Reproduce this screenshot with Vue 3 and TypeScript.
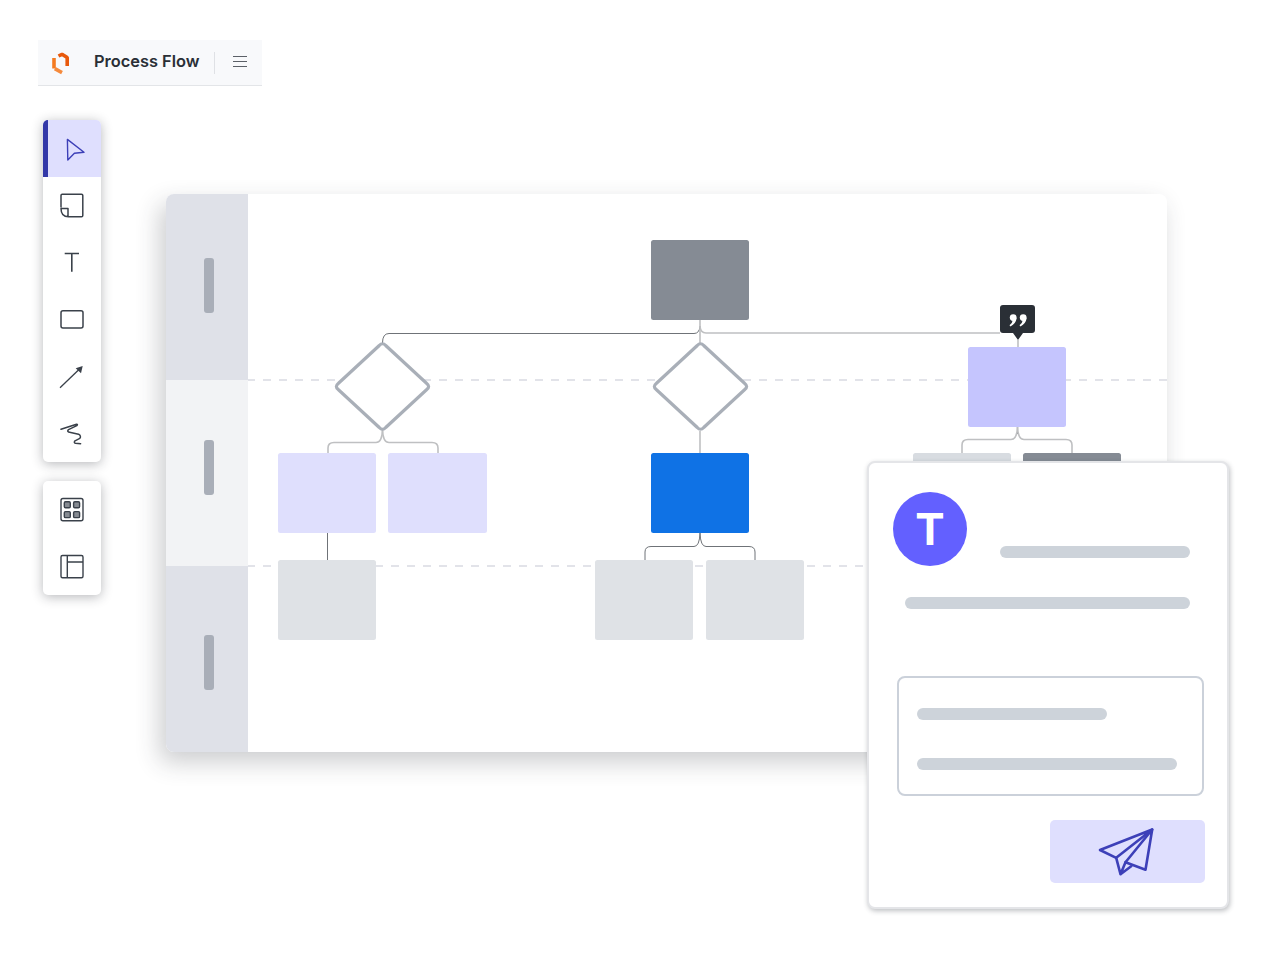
<template>
  <div class="page">
    <header class="titlebar">
      <svg class="logo" width="30" height="30" viewBox="0 0 30 30" fill="none" stroke-width="3.6">
        <path d="M8 10 V20.5" stroke="#f47a20" />
        <path d="M8.8 20.6 L16 24.6" stroke="#f58a3c" />
        <path d="M12.5 8 L16 6.3 L21.2 9.6 V18" stroke="#e8590c" stroke-linejoin="bevel" />
      </svg>
      <span class="title">Process Flow</span>
      <span class="divider"></span>
      <span class="burger"><i></i><i></i><i></i></span>
    </header>

    <div class="workspace">
      <aside class="tools">
        <div class="toolbar">
          <div class="tool active">
            <svg width="32" height="32" viewBox="0 0 32 32" fill="none" stroke="#3d40b8" stroke-width="1.4" stroke-linejoin="round">
              <path d="M11.4 7.4 L28 20.2 L18.4 21.3 L11.8 28 Z" />
            </svg>
          </div>
          <div class="tool">
            <svg width="32" height="32" viewBox="0 0 32 32" fill="none" stroke="#3a414a" stroke-width="1.5">
              <path d="M5 18.5 V6.5 Q5 5.2 6.2 5.2 H25.5 Q26.8 5.2 26.8 6.5 V26.5 Q26.8 27.8 25.5 27.8 H12.5 Q5 27.8 5 19.5 H12 V27.8" stroke-linejoin="round" />
            </svg>
          </div>
          <div class="tool">
            <svg width="32" height="32" viewBox="0 0 32 32" fill="none" stroke="#3a414a" stroke-width="1.6">
              <path d="M8.7 7.5 H23 M15.8 7.5 V25.8" />
            </svg>
          </div>
          <div class="tool">
            <svg width="32" height="32" viewBox="0 0 32 32" fill="none" stroke="#3a414a" stroke-width="1.5">
              <rect x="5" y="7.8" width="22" height="17.2" rx="2" />
            </svg>
          </div>
          <div class="tool">
            <svg width="32" height="32" viewBox="0 0 32 32" fill="none">
              <path d="M4 27.7 L23 9.5" stroke="#3a414a" stroke-width="1.3" />
              <path d="M26.7 6 L19.7 8.3 L25 13.3 Z" fill="#3a414a" />
            </svg>
          </div>
          <div class="tool">
            <svg width="32" height="32" viewBox="0 0 32 32" fill="none" stroke="#3a414a" stroke-width="1.5" stroke-linecap="round" stroke-linejoin="round">
              <path d="M5 12.3 L20.5 7.2 Q22.2 7.4 20.8 8.6 L12.5 12.6 Q11 14 12.5 15 L22.5 17.2 Q25.6 19 23.8 21.4 L19 23.8 Q17.4 25.8 19.5 26.3 L24.6 26.8" />
            </svg>
          </div>
        </div>

        <div class="toolbar">
          <div class="tool">
            <svg width="32" height="32" viewBox="0 0 32 32" fill="none" stroke="#3a414a" stroke-width="1.4">
              <rect x="5" y="5.5" width="22" height="22.2" rx="2" />
              <rect x="8.3" y="8.8" width="6" height="6" rx="1.2" fill="#868b92" />
              <rect x="17.6" y="8.8" width="6" height="6" rx="1.2" fill="#868b92" />
              <rect x="8.3" y="18.6" width="6" height="6" rx="1.2" fill="#868b92" />
              <rect x="17.6" y="18.6" width="6" height="6" rx="1.2" fill="#868b92" />
            </svg>
          </div>
          <div class="tool">
            <svg width="32" height="32" viewBox="0 0 32 32" fill="none" stroke="#3a414a" stroke-width="1.4">
              <rect x="5" y="5.5" width="22" height="22.2" rx="1.5" />
              <path d="M11.3 5.5 V27.7 M11.3 12 H27" />
            </svg>
          </div>
        </div>
      </aside>

      <main class="board">
        <div class="lanes">
          <div v-for="lane in lanes" :key="lane.id" class="lane" :class="lane.tone">
            <span class="grip" :class="lane.id"></span>
          </div>
        </div>

        <!-- coordinates below are page pixels, the viewBox takes care of the offset -->
        <svg class="canvas" width="919" height="558" viewBox="248 194 919 558" fill="none">
          <path d="M247 380 H1167 M247 566 H1167" stroke="#e2e3e9" stroke-width="2" stroke-dasharray="8 8" />

          <rect
            v-for="node in nodes"
            :key="node.id"
            :x="node.x"
            :y="node.y"
            :width="node.w"
            :height="node.h"
            :fill="node.fill"
            rx="2.5"
          />

          <path v-for="d in darkLines" :key="d" :d="d" stroke="#6f7378" stroke-width="1" />
          <path v-for="d in lightLines" :key="d" :d="d" stroke="#bfc0c2" stroke-width="1.6" />

          <path
            v-for="cx in diamonds"
            :key="cx"
            :d="diamondPath(cx)"
            fill="#fff"
            stroke="#a9afb8"
            stroke-width="3.2"
          />

          <path d="M1018 340 L1013 333 H1003 Q1000 333 1000 330 V308 Q1000 305 1003 305 H1032 Q1035 305 1035 308 V330 Q1035 333 1032 333 H1023 Z" fill="#2a2f36" />
          <g v-for="dx in [0, 10]" :key="dx" :transform="`translate(${dx} 0)`" fill="#fff">
            <circle cx="1013.2" cy="317.6" r="3.4" />
            <path d="M1016.6 318 Q1016 323.5 1010.5 326.5 L1009.5 325.2 Q1012.5 323 1012.8 320 Z" />
          </g>
        </svg>

        <section class="panel">
          <div class="panel-head">
            <div class="avatar">T</div>
            <span class="line name"></span>
          </div>
          <span class="line sub"></span>
          <div class="message">
            <span class="line short"></span>
            <span class="line long"></span>
          </div>
          <button class="send" type="button">
            <svg width="60" height="52" viewBox="0 0 60 52" fill="none" stroke="#3d40b8" stroke-width="2.6" stroke-linejoin="round" stroke-linecap="round">
              <path d="M54.2 3.5 L2 24 L18.2 31.8 Z" />
              <path d="M54.2 3.5 L47.5 43.8 L27.5 36.2 Z" />
              <path d="M18.2 31.8 L22.5 48.2 L33.2 40.2 M27.5 36.2 L22.5 48.2" />
            </svg>
          </button>
        </section>
      </main>
    </div>
  </div>
</template>

<script setup lang="ts">
interface DiagramNode {
  id: string
  x: number
  y: number
  w: number
  h: number
  fill: string
}

const lanes = [
  { id: 'first', tone: 'dark' },
  { id: 'second', tone: 'light' },
  { id: 'third', tone: 'dark' },
]

const LAVENDER = '#dfdffd'
const GREY = '#dfe2e6'
const SLATE = '#858b94'

const nodes: DiagramNode[] = [
  { id: 'start', x: 651, y: 240, w: 98, h: 80, fill: SLATE },
  { id: 'left-a', x: 278, y: 453, w: 98, h: 80, fill: LAVENDER },
  { id: 'left-b', x: 388, y: 453, w: 99, h: 80, fill: LAVENDER },
  { id: 'left-c', x: 278, y: 560, w: 98, h: 80, fill: GREY },
  { id: 'mid', x: 651, y: 453, w: 98, h: 80, fill: '#0f72e5' },
  { id: 'mid-a', x: 595, y: 560, w: 98, h: 80, fill: GREY },
  { id: 'mid-b', x: 706, y: 560, w: 98, h: 80, fill: GREY },
  { id: 'right', x: 968, y: 347, w: 98, h: 80, fill: '#c5c5fe' },
  { id: 'right-a', x: 913, y: 453, w: 98, h: 80, fill: '#d8dce1' },
  { id: 'right-b', x: 1023, y: 453, w: 98, h: 80, fill: SLATE },
]

const darkLines = [
  'M700 326 Q699.5 333.5 694 333.5 H389 Q382.5 333.5 382.5 343',
  'M327.5 533 V560',
  'M700 533 Q699.5 546.5 694 546.5 H651 Q645 546.5 645 552 V560',
  'M700 533 Q700.5 546.5 706 546.5 H749 Q755 546.5 755 552 V560',
  'M1017.5 427 V434',
]

const lightLines = [
  'M700 320 V343',
  'M700 326 Q700.5 333 706 333 H1000',
  'M1018 340 V347',
  'M700 431 V453',
  'M382.5 430 Q382 442.5 376 442.5 H334 Q328 442.5 328 448 V453',
  'M382.5 430 Q383 442.5 389 442.5 H432 Q438 442.5 438 448 V453',
  'M1017.5 427 Q1017 439.5 1011 439.5 H968 Q962 439.5 962 445 V453',
  'M1017.5 427 Q1018 439.5 1024 439.5 H1066 Q1072 439.5 1072 445 V453',
]

const diamonds = [382.5, 700.5]

// rhombus with softened corners, centred on the given x
const diamondPath = (cx: number): string => {
  const cy = 386.5
  const hw = 47.5
  const hh = 44
  const r = 3
  const dx = (r * hw) / hh
  return [
    `M${cx - dx} ${cy - hh + r}`,
    `Q${cx} ${cy - hh - 0.5} ${cx + dx} ${cy - hh + r}`,
    `L${cx + hw - dx} ${cy - r}`,
    `Q${cx + hw + 0.5} ${cy} ${cx + hw - dx} ${cy + r}`,
    `L${cx + dx} ${cy + hh - r}`,
    `Q${cx} ${cy + hh + 0.5} ${cx - dx} ${cy + hh - r}`,
    `L${cx - hw + dx} ${cy + r}`,
    `Q${cx - hw - 0.5} ${cy} ${cx - hw + dx} ${cy - r}`,
    'Z',
  ].join(' ')
}
</script>

<style>
html,
body {
  background: #fff;
}
</style>

<style scoped>
.page {
  box-sizing: border-box;
  width: 1280px;
  height: 960px;
  padding: 40px 0 0 38px;
  overflow: hidden;
  font-family: Inter, "Liberation Sans", sans-serif;
}

.titlebar {
  box-sizing: border-box;
  display: flex;
  align-items: center;
  width: 224px;
  height: 46px;
  background: #f8f9fb;
  border-bottom: 1px solid #e3e5e8;
}

.logo {
  flex: none;
  margin-left: 8px;
}

.title {
  margin: 0 0 4px 18px;
  font-size: 16.4px;
  font-weight: 600;
  color: #2a2f36;
  white-space: nowrap;
}

.divider {
  flex: none;
  width: 1px;
  height: 22px;
  margin-left: 14px;
  background: #dfe1e5;
}

.burger {
  display: flex;
  flex-direction: column;
  flex: none;
  gap: 4px;
  width: 14px;
  margin: 0 0 2px 18px;
}

.burger i {
  display: block;
  height: 1px;
  background: #5b6067;
}

.workspace {
  display: flex;
  align-items: flex-start;
  margin-top: 34px;
  padding-left: 5px;
}

.tools {
  display: flex;
  flex-direction: column;
  gap: 19px;
  width: 58px;
}

.toolbar {
  overflow: hidden;
  background: #fff;
  border-radius: 5px;
  box-shadow: 0 2px 12px rgba(30, 35, 45, 0.32);
}

.tool {
  box-sizing: border-box;
  display: flex;
  justify-content: center;
  height: 57px;
  padding: 12px 0 0;
}

.tool.active {
  background: #dfdffe;
  border-left: 5px solid #3338a8;
}

.tool.active svg {
  margin-left: -5px;
}

.board {
  position: relative;
  display: flex;
  flex: none;
  width: 1001px;
  height: 558px;
  margin: 74px 0 0 65px;
  background: #fff;
  border-radius: 8px;
  box-shadow: -6px 10px 24px rgba(40, 45, 55, 0.24);
}

.lanes {
  display: flex;
  flex-direction: column;
  flex: none;
  width: 82px;
  overflow: hidden;
  border-radius: 8px 0 0 8px;
}

.lane {
  display: flex;
  align-items: center;
  justify-content: center;
  height: 186px;
}

.lane.dark {
  background: #dfe1e8;
}

.lane.light {
  background: #f2f3f5;
}

.grip {
  width: 10px;
  height: 55px;
  margin-left: 4px;
  border-radius: 3px;
  background: #a9aeb8;
}

.grip.first {
  margin-bottom: 4px;
}

.grip.second {
  margin-bottom: 11px;
}

.grip.third {
  margin-top: 7px;
}

.canvas {
  display: block;
  flex: none;
}

.panel {
  position: absolute;
  top: 267px;
  left: 701px;
  box-sizing: border-box;
  display: flex;
  flex-direction: column;
  align-items: flex-start;
  width: 362px;
  height: 448px;
  padding: 29px 0 0 24px;
  background: #fff;
  border: 2px solid #e4e5e8;
  border-radius: 8px;
  box-shadow: 1px 2px 5px rgba(40, 45, 55, 0.3);
}

.panel-head {
  display: flex;
  align-items: flex-end;
}

.avatar {
  display: flex;
  align-items: center;
  justify-content: center;
  width: 74px;
  height: 74px;
  border-radius: 50%;
  background: #6360ff;
  color: #fff;
  font-size: 44px;
  font-weight: 700;
  line-height: 1;
}

.line {
  display: block;
  height: 12px;
  border-radius: 6px;
  background: #cdd3da;
}

.name {
  width: 190px;
  margin: 0 0 8px 33px;
}

.sub {
  width: 285px;
  margin: 31px 0 0 12px;
}

.message {
  box-sizing: border-box;
  display: flex;
  flex-direction: column;
  gap: 38px;
  width: 307px;
  height: 120px;
  margin: 67px 0 0 4px;
  padding: 30px 0 0 18px;
  border: 2px solid #cbd1da;
  border-radius: 8px;
}

.short {
  width: 190px;
}

.long {
  width: 260px;
}

.send {
  display: flex;
  align-items: center;
  justify-content: center;
  width: 155px;
  height: 63px;
  margin: 24px 0 0 157px;
  padding: 0;
  border: 0;
  border-radius: 5px;
  background: #dfdffe;
}
</style>
